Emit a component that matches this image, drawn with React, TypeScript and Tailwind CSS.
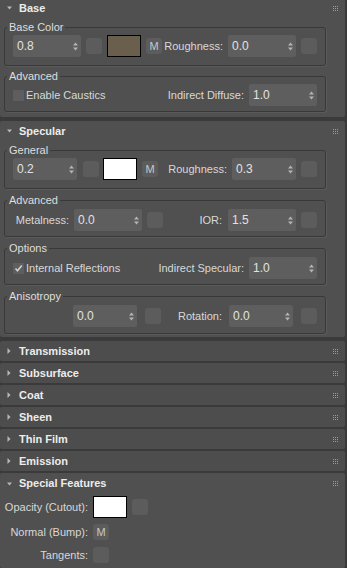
import React from "react";

const Tri = ({ open }: { open: boolean }) =>
  open ? (
    <svg width="5" height="4" viewBox="0 0 5 4" className="shrink-0">
      <path d="M0 0.5H5L2.5 3.5Z" fill="#b8b8b8" />
    </svg>
  ) : (
    <svg width="4" height="6" viewBox="0 0 4 6" className="shrink-0">
      <path d="M0.5 0V6L3.5 3Z" fill="#b8b8b8" />
    </svg>
  );

const Grip = () => (
  <svg width="5" height="5" viewBox="0 0 5 5" fill="#9c9c9c" className="shrink-0">
    {[0, 2, 4].flatMap((y) =>
      [0, 2, 4].map((x) => <rect key={`${x}-${y}`} x={x} y={y} width="1" height="1" />)
    )}
  </svg>
);

const Header = ({ title, open, h }: { title: string; open: boolean; h: string }) => (
  <div className={`flex items-center pl-[7px] pr-[7px] ${h}`}>
    <Tri open={open} />
    <span
      className={`${open ? "ml-[7px]" : "ml-[8px]"} flex-1 text-[11px] font-bold text-[#ececec]`}
    >
      {title}
    </span>
    <Grip />
  </div>
);

const Arrows = () => (
  <svg width="5" height="9" viewBox="0 0 5 9" className="shrink-0">
    <path d="M0 3.5L2.5 0.5L5 3.5Z" fill="#b4b4b4" />
    <path d="M0 5.5H5L2.5 8.5Z" fill="#b4b4b4" />
  </svg>
);

const Spinner = ({ w, v, className = "" }: { w: string; v: string; className?: string }) => (
  <div
    className={`${w} ${className} h-[22px] shrink-0 rounded-[2px] bg-[#5e5e5e] flex items-center justify-between pl-[4px] pr-[3px] text-[12px] text-[#e2e2e2]`}
  >
    <span>{v}</span>
    <Arrows />
  </div>
);

const Btn = ({ className = "" }: { className?: string }) => (
  <div className={`${className} w-[16px] h-[16px] shrink-0 rounded-[3px] bg-[#5c5c5c]`} />
);

const MBtn = ({ className = "" }: { className?: string }) => (
  <div
    className={`${className} w-[16px] h-[16px] shrink-0 rounded-[3px] bg-[#5c5c5c] flex items-center justify-center text-[11px] text-[#c8c8c8]`}
  >
    M
  </div>
);

const Swatch = ({ className = "" }: { className?: string }) => (
  <div className={`${className} w-[34px] h-[22px] shrink-0 border border-black`} />
);

const Check = ({ checked }: { checked: boolean }) => (
  <div className="w-[11px] h-[11px] shrink-0 bg-[#5e5e5e] flex items-center justify-center">
    {checked && (
      <svg width="9" height="9" viewBox="0 0 9 9">
        <path d="M1.5 4.5L3.5 6.8L7.8 1.5" stroke="#d0d0d0" strokeWidth="1.6" fill="none" />
      </svg>
    )}
  </div>
);

const Group = ({
  label,
  children,
  className = "",
  pad,
}: {
  label: string;
  children: React.ReactNode;
  className?: string;
  pad: string;
}) => (
  <fieldset
    className={`${className} ml-[4px] mr-[19px] border border-[#393939] rounded-[3px] p-0 shadow-[1px_1px_0_#5a5a5a]`}
  >
    <legend className="ml-[2px] px-[2px] text-[11px] leading-[12px] text-[#dedede]">{label}</legend>
    <div className={`px-[8px] ${pad}`}>{children}</div>
  </fieldset>
);

const Row = ({ children }: { children: React.ReactNode }) => (
  <div className="flex items-center h-[22px] text-[11px] text-[#d8d8d8]">{children}</div>
);

export default function App() {
  return (
    <div className="w-[347px] h-[568px] overflow-hidden bg-[#3a3a3a] flex font-['Liberation_Sans',Arial,sans-serif]">
      <div className="w-[345px] flex flex-col">
        {/* Base */}
        <div className="-mt-[2px] bg-[#505050] rounded-[2px] pb-[5px]">
          <Header title="Base" open h="h-[20px]" />
          <Group label="Base Color" className="mt-[3px]" pad="pt-[2px] pb-[8px]">
            <Row>
              <Spinner w="w-[68px]" v="0.8" />
              <Btn className="ml-[5px]" />
              <Swatch className="ml-[5px] bg-[#6a5e4c]" />
              <MBtn className="ml-[5px]" />
              <span className="flex-1 text-right mr-[5px]">Roughness:</span>
              <Spinner w="w-[68px]" v="0.0" />
              <Btn className="ml-[5px]" />
            </Row>
          </Group>
          <Group label="Advanced" className="mt-[4px]" pad="pt-[2px] pb-[5px]">
            <Row>
              <Check checked={false} />
              <span className="ml-[2px]">Enable Caustics</span>
              <span className="flex-1 text-right mr-[5px]">Indirect Diffuse:</span>
              <Spinner w="w-[68px]" v="1.0" />
            </Row>
          </Group>
        </div>

        {/* Specular */}
        <div className="mt-[4px] bg-[#505050] rounded-[2px] pb-[3px]">
          <Header title="Specular" open h="h-[20px]" />
          <Group label="General" className="mt-[3px]" pad="pt-[2px] pb-[8px]">
            <Row>
              <Spinner w="w-[64px]" v="0.2" />
              <Btn className="ml-[6px]" />
              <Swatch className="ml-[4px] bg-white" />
              <MBtn className="ml-[5px]" />
              <span className="flex-1 text-right mr-[5px]">Roughness:</span>
              <Spinner w="w-[64px]" v="0.3" />
              <Btn className="ml-[5px]" />
            </Row>
          </Group>
          <Group label="Advanced" className="mt-[5px]" pad="pt-[3px] pb-[5px]">
            <Row>
              <span className="w-[56px] shrink-0 text-right">Metalness:</span>
              <Spinner w="w-[68px]" v="0.0" className="ml-[5px]" />
              <Btn className="ml-[5px]" />
              <span className="flex-1 text-right mr-[6px]">IOR:</span>
              <Spinner w="w-[68px]" v="1.5" />
              <Btn className="ml-[5px]" />
            </Row>
          </Group>
          <Group label="Options" className="mt-[5px]" pad="pt-[3px] pb-[5px]">
            <Row>
              <Check checked />
              <span className="ml-[2px]">Internal Reflections</span>
              <span className="flex-1 text-right mr-[5px]">Indirect Specular:</span>
              <Spinner w="w-[68px]" v="1.0" />
            </Row>
          </Group>
          <Group label="Anisotropy" className="mt-[5px]" pad="pt-[3px] pb-[6px]">
            <Row>
              <div className="w-[60px] shrink-0" />
              <Spinner w="w-[64px]" v="0.0" />
              <Btn className="ml-[8px]" />
              <span className="flex-1 text-right mr-[7px]">Rotation:</span>
              <Spinner w="w-[64px]" v="0.0" />
              <Btn className="ml-[8px]" />
            </Row>
          </Group>
        </div>

        {/* Collapsed rollouts */}
        <div className="mt-[4px] bg-[#4d4d4d] rounded-[2px]">
          <Header title="Transmission" open={false} h="h-[20px]" />
        </div>
        <div className="mt-[2px] bg-[#4d4d4d] rounded-[2px]">
          <Header title="Subsurface" open={false} h="h-[20px]" />
        </div>
        <div className="mt-[2px] bg-[#4d4d4d] rounded-[2px]">
          <Header title="Coat" open={false} h="h-[20px]" />
        </div>
        <div className="mt-[2px] bg-[#4d4d4d] rounded-[2px]">
          <Header title="Sheen" open={false} h="h-[20px]" />
        </div>
        <div className="mt-[2px] bg-[#4d4d4d] rounded-[2px]">
          <Header title="Thin Film" open={false} h="h-[20px]" />
        </div>
        <div className="mt-[2px] bg-[#4d4d4d] rounded-[2px]">
          <Header title="Emission" open={false} h="h-[20px]" />
        </div>

        {/* Special Features */}
        <div className="mt-[2px] bg-[#505050] rounded-[2px] flex-1 text-[11px] text-[#d8d8d8]">
          <Header title="Special Features" open h="h-[21px]" />
          <div className="pt-[2px] flex flex-col">
            <div className="flex items-center h-[22px]">
              <span className="w-[88px] shrink-0 text-right">Opacity (Cutout):</span>
              <Swatch className="ml-[5px] bg-white" />
              <Btn className="ml-[5px]" />
            </div>
            <div className="flex items-center h-[16px] mt-[6px]">
              <span className="w-[88px] shrink-0 text-right">Normal (Bump):</span>
              <MBtn className="ml-[5px]" />
            </div>
            <div className="flex items-center h-[16px] mt-[7px]">
              <span className="w-[88px] shrink-0 text-right">Tangents:</span>
              <Btn className="ml-[5px]" />
            </div>
          </div>
        </div>
      </div>
      <div className="w-[2px] bg-[#3a3a3a]" />
    </div>
  );
}
